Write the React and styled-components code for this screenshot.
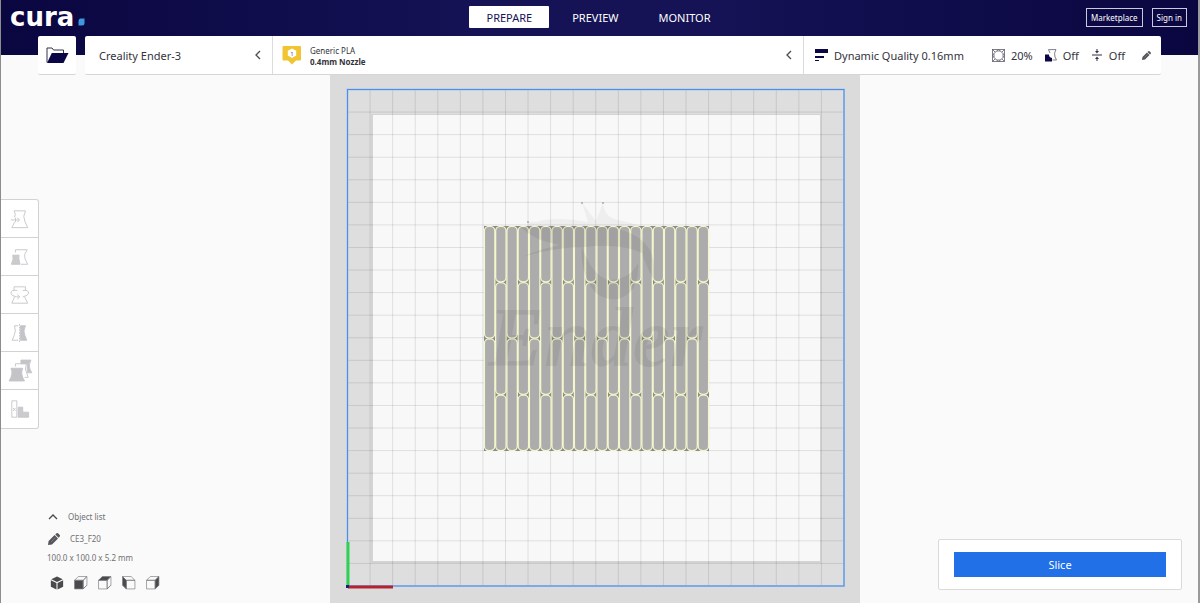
import React from 'react'
import styled, { createGlobalStyle } from 'styled-components'

const GlobalStyle = createGlobalStyle`
  * { box-sizing: border-box; }
  body {
    margin: 0;
    background: #fafafa;
    color: #33333b;
    font-family: "Noto Sans", "Open Sans", sans-serif;
    font-size: 11px;
  }
  button { font: inherit; color: inherit; cursor: pointer; }
  svg { display: block; }
`

const Page = styled.div`
  display: flex;
  flex-direction: column;
  min-height: 100vh;
  border-left: 1px solid #8c8c8e;
  border-right: 2px solid #9a9a9c;
`

const Header = styled.header`
  background: linear-gradient(90deg, #090640 0%, #151255 40%, #151255 60%, #090640 100%) no-repeat;
  background-size: 100% 55px;
`

const TopBar = styled.div`
  display: grid;
  grid-template-columns: 1fr auto 1fr;
  align-items: center;
  height: 36px;
  padding: 0 11px 2px 9px;
`

const Logo = styled.a`
  display: flex;
  align-items: flex-end;
  gap: 4px;
  color: #fff;
  font: bold 26px/30px "DejaVu Sans", sans-serif;
  text-decoration: none;
  svg { margin-bottom: 6px; }
`

const Stages = styled.nav`
  display: flex;
  gap: 6px;
`

const Stage = styled.button`
  height: 22px;
  padding: 0 17px;
  border: 0;
  border-radius: 1px;
  background: ${p => (p.$active ? '#fff' : 'transparent')};
  color: ${p => (p.$active ? '#151255' : '#fff')};
`

const Account = styled.div`
  display: flex;
  justify-content: flex-end;
  gap: 9px;
`

const OutlineButton = styled.button`
  height: 19px;
  padding: 0 4px;
  border: 1px solid #c9c8dc;
  background: none;
  color: #fff;
  font-size: 8px;
`

const ConfigRow = styled.div`
  display: flex;
  gap: 9px;
  padding: 0 37px;
`

const OpenButton = styled.button`
  display: grid;
  place-items: center;
  width: 38px;
  height: 39px;
  padding: 0;
  border: 0;
  border-bottom: 1px solid #d6d6d6;
  border-radius: 2px;
  background: #fff;
`

const ConfigBar = styled.div`
  display: grid;
  grid-template-columns: 188px 1fr 357px;
  flex: 1;
  height: 39px;
  border-bottom: 1px solid #d6d6d6;
  border-radius: 2px;
  background: #fff;
`

const ConfigItem = styled.button`
  display: flex;
  align-items: center;
  gap: ${p => p.$gap || 8}px;
  padding: 0 9px 0 ${p => p.$left || 9}px;
  border: 0;
  border-right: ${p => (p.$last ? '0' : '1px solid #dcdcdc')};
  background: none;
  text-align: left;
`

const Grow = styled.span`
  flex: 1;
`

const Material = styled.span`
  flex: 1;
  padding-top: 2px;
  font-size: 8px;
  line-height: 11px;
  b { display: block; }
`

const Setting = styled.span`
  display: flex;
  align-items: center;
  gap: 6px;
`

const EditSettings = styled.span`
  padding: 0 1px 0 5px;
`

const Main = styled.main`
  display: grid;
  flex: 1;
  grid-template-rows: minmax(0, 1fr);
`

const Scene = styled.div`
  display: flex;
  justify-content: center;
  grid-area: 1 / 1;
  padding-right: 9px;
`

const Overlay = styled.div`
  display: flex;
  flex-direction: column;
  justify-content: space-between;
  grid-area: 1 / 1;
  z-index: 1;
  padding-top: 124px;
`

const Tools = styled.div`
  display: flex;
  flex-direction: column;
  width: 38px;
  border: 1px solid #d2d2d2;
  border-left: 0;
  border-radius: 0 3px 3px 0;
  background: #fff;
`

const Tool = styled.button`
  display: grid;
  place-items: center;
  height: 38px;
  padding: 0;
  border: 0;
  border-bottom: 1px solid #d2d2d2;
  background: none;
  &:last-child { border-bottom: 0; }
`

const Footer = styled.footer`
  display: flex;
  justify-content: space-between;
  align-items: flex-end;
  padding: 0 16px 13px 46px;
`

const ObjectInfo = styled.div`
  display: flex;
  flex-direction: column;
  align-items: flex-start;
  color: #707074;
  font-size: 8px;
  line-height: 12px;
`

const ObjectButton = styled.button`
  display: flex;
  align-items: center;
  gap: 10px;
  height: 22px;
  padding: 0 0 0 1px;
  border: 0;
  background: none;
`

const Size = styled.p`
  margin: 2px 0 12px;
`

const Views = styled.div`
  display: flex;
  gap: 10px;
  padding-left: 3px;
`

const ViewButton = styled.button`
  padding: 0;
  border: 0;
  background: none;
`

const ActionPanel = styled.section`
  width: 244px;
  padding: 12px 15px;
  border: 1px solid #dadada;
  border-radius: 2px;
  background: #fff;
`

const SliceButton = styled.button`
  display: block;
  width: 100%;
  height: 25px;
  border: 0;
  background: #2170e8;
  color: #fff;
`

const Chevron = ({ up }) => (
  <svg width="10" height="10" viewBox="0 0 10 10" fill="none" stroke="#4a4a50" strokeWidth="1.3">
    <path d={up ? 'M1 7 L5 3 L9 7' : 'M7 1 L3 5 L7 9'} />
  </svg>
)

const Pencil = ({ size = 12 }) => (
  <svg width={size} height={size} viewBox="0 0 12 12" fill="#55555b">
    <path d="M0 12 L.6 8 L6.600 2 L10 5.400 L4 11.400 Z" />
    <path d="M7.300 1.400 L8.500 .3 Q9.300 -.3 10 .3 L11.700 2 Q12.300 2.700 11.700 3.500 L10.600 4.700 Z" />
    <path d="M3.200 8.800 L7.500 4.500" stroke="#a4a4a8" strokeWidth=".5" />
  </svg>
)

const FolderIcon = () => (
  <svg width="23" height="17" viewBox="0 0 23 17">
    <path d="M1 15.5 V1 H6 L7.5 3 H17.5 V6" fill="none" stroke="#33334a" />
    <path d="M5.8 6 H22.5 L17.5 16 H1 Z" fill="#0b0747" />
  </svg>
)

const MaterialIcon = () => (
  <svg width="20" height="20" viewBox="0 0 20 20">
    <path d="M1.5 1 H18 Q19 1 19 2 V14.5 Q19 15.5 18 15.5 H14 L10 19.5 L6 15.5 H1.5 Q.5 15.5 .5 14.5 V2 Q.5 1 1.5 1 Z" fill="#f1c432" />
    <path d="M10 3.500 L14.200 5.800 V10.600 L10 13 L5.800 10.600 V5.800 Z" fill="#fff" />
    <text x="10" y="10.500" fontSize="6" textAnchor="middle" fill="#55555b">1</text>
  </svg>
)

const QualityIcon = () => (
  <svg width="13" height="12" viewBox="0 0 13 12" fill="#0b0747">
    <path d="M0 0 H13 V4 H0 Z M0 7 H9 V9 H0 Z M0 11 H4 V12 H0 Z" />
  </svg>
)

const InfillIcon = () => (
  <svg width="13" height="13" viewBox="0 0 13 13" fill="none" stroke="#5f5f6e" strokeWidth=".8">
    <rect x=".5" y=".5" width="12" height="12" />
    <path d="M4.500 2 H8.500 L11 4.500 V8.500 L8.500 11 H4.500 L2 8.500 V4.500 Z" />
    <path d="M.5 .5 L3.200 3.200 M12.500 .5 L9.800 3.200 M12.500 12.500 L9.800 9.800 M.5 12.500 L3.200 9.800 M4.500 2 L6.500 .5 L8.500 2 M4.500 11 L6.500 12.500 L8.500 11 M2 4.500 L.5 6.500 L2 8.500 M11 4.500 L12.500 6.500 L11 8.500" />
  </svg>
)

const SupportIcon = () => (
  <svg width="12" height="13" viewBox="0 0 12 13">
    <path d="M3.500 .6 H11 Q8.600 4 10 8 L11.500 11 H7.500 M3.500 .6 L5 4" fill="none" stroke="#5f5f6e" strokeWidth=".8" />
    <path d="M0 5.500 H4 Q3.800 8 7 9 V12.500 H0 Z" fill="#0b0747" />
  </svg>
)

const AdhesionIcon = () => (
  <svg width="12" height="12" viewBox="0 0 12 12" fill="#33334a">
    <path d="M1 5.600 H11 V6.400 H1 Z M5.500 0 H6.500 V2 H8 L6 4.500 L4 2 H5.500 Z M5.500 12 H6.500 V10 H8 L6 7.500 L4 10 H5.500 Z" />
  </svg>
)

const toolIcons = {
  Move: (
    <>
      <path d="M4 8 Q6 5 3.500 1 H16 Q12.500 7 15.500 13 L18.500 19.500 H1 L4 13.500" />
      <path d="M0 11 H9 M7 8.500 L9.500 11 L7 13.500 M5 8.500 V13.500" />
    </>
  ),
  Scale: (
    <>
      <path d="M5 5 V2 H18 Q13.500 7 15.500 12 L18.500 18 H11" />
      <path d="M2 8 H9 Q8 11 10 18 H.5 Q3.500 12 2 8 Z" fill="#cbcbce" />
    </>
  ),
  Rotate: (
    <>
      <path d="M3.500 5 V1 H16 V5 M15 12 L18.500 19 H1 L4 12" />
      <path d="M7 5 Q0 4 0 8 Q0 11 6 12 H9 M7 9.500 L9.800 12 L7 14.500 M13 5 Q19.500 4 19.500 8 Q19 11 13 12" />
    </>
  ),
  Mirror: (
    <>
      <path d="M8 2 H4 Q6 8 3.500 13 L1.500 18 H8" />
      <path d="M9.500 0 V20" strokeDasharray="2 1" />
      <path d="M10.500 2 H16 Q13 8 15.500 13 L17.500 18 H10.500 Z" fill="#c4c4c8" />
    </>
  ),
  'Per Model Settings': (
    <>
      <path d="M11 -2 H22 Q19 4 21 8 L23 12 H18 V2 H11 Z" fill="#c4c4c8" />
      <path d="M5 5 V2 H17 L16 8 L19 17 H15" />
      <path d="M0 7 H13 Q10 13 15 21 H-2 Q3 13 0 7 Z" fill="#c4c4c8" />
    </>
  ),
  'Support Blocker': (
    <>
      <path d="M1 1 H6.500 V19 H1 Z M2.500 9 L5 12 M5 9 L2.500 12" />
      <path d="M8 8 H13 V13.500 H19.500 V19 H8 Z" fill="#cbcbce" />
    </>
  ),
}

const cubeFaces = {
  front: 'M.5 4 H8.500 V12 H.5 Z',
  top: 'M.5 4 L4 .5 H12 L8.500 4 Z',
  right: 'M8.500 4 L12 .5 V8.500 L8.500 12 Z',
}

const CubeIcon = ({ face, flip }) => (
  <svg width="14" height="14" viewBox="0 0 13 13" stroke="#77777b" strokeWidth=".6">
    <g transform={flip ? 'translate(12.500 0) scale(-1 1)' : undefined}>
      {Object.keys(cubeFaces).map(k => (
        <path key={k} d={cubeFaces[k]} fill={k === face ? '#4a4a4e' : 'none'} />
      ))}
      <path d="M8.500 12 L12 8.500" />
    </g>
  </svg>
)

const IsoCube = () => (
  <svg width="14" height="14" viewBox="0 0 13 13" fill="#4a4a4e">
    <path d="M6.500 .5 L11.800 3 L6.500 5.500 L1.200 3 Z M.8 4 L6 6.500 V12.500 L.8 10 Z M12.200 4 L7 6.500 V12.500 L12.200 10 Z" />
  </svg>
)

const PLATE = { x: 17.5, y: 14.5, size: 496.5, cells: 22 }
const MODEL = { x: 154, y: 151, size: 225, columns: 20 }

const gridLines = Array.from({ length: PLATE.cells - 1 }, (_, i) => ((i + 1) * PLATE.size) / PLATE.cells)

// strips alternate: cut in the middle, or at one and three quarters
const strips = []
for (let c = 0; c < MODEL.columns; c++) {
  const cuts = c % 2 ? [0, 0.25, 0.75, 1] : [0, 0.5, 1]
  for (let i = 0; i < cuts.length - 1; i++) {
    strips.push({
      x: MODEL.x + (c * MODEL.size) / MODEL.columns,
      y: MODEL.y + cuts[i] * MODEL.size,
      h: (cuts[i + 1] - cuts[i]) * MODEL.size,
    })
  }
}

const BuildPlate = () => (
  <svg width="530" height="100%" viewBox="0 0 530 528" preserveAspectRatio="xMidYMid slice" role="img" aria-label="Build plate">
    <rect width="530" height="528" fill="#dbdbdc" />
    <rect x={PLATE.x} y={PLATE.y} width={PLATE.size} height={PLATE.size} fill="#dedede" />
    <rect x="41" y="39" width="450" height="449" fill="#d4d4d4" />
    <rect x="43" y="40" width="447" height="446" fill="#f8f8f8" />
    <g stroke="#000" strokeOpacity=".1">
      {gridLines.map(d => (
        <path key={d} d={`M${PLATE.x + d} ${PLATE.y} v${PLATE.size} M${PLATE.x} ${PLATE.y + d} h${PLATE.size}`} />
      ))}
    </g>
    <path
      d="M198 152 Q196 146 206 147 Q225 141 258 147 L252 128 L266 146 L273 128 Q274 142 288 145 Q304 148 312 152 Z"
      fill="#000"
      fillOpacity=".04"
    />
    <rect x={MODEL.x} y={MODEL.y} width={MODEL.size} height={MODEL.size} fill="#8b8b84" />
    {strips.map(s => (
      <rect
        key={`${s.x}-${s.y}`}
        x={s.x + 0.4}
        y={s.y + 0.4}
        width={MODEL.size / MODEL.columns - 0.8}
        height={s.h - 0.8}
        rx="4.5"
        fill="#adacad"
        stroke="#f4f6cc"
        strokeWidth="1.3"
      />
    ))}
    <g fill="#3c3c3c" fillOpacity=".09">
      <path d="M190 152 H280 Q322 160 324 190 V205 Q318 196 312 178 Q290 168 255 172 Q225 172 192 182 Q210 174 230 170 Q205 166 190 152 Z" />
      <path d="M252 172 Q262 200 278 205 Q300 205 308 188 Q310 218 288 224 Q266 226 258 206 Q250 190 252 172 Z" />
      <text x="158" y="291" fontFamily="Liberation Serif, serif" fontWeight="bold" fontStyle="italic" fontSize="84">Ender</text>
    </g>
    <g fill="#aaa">
      <circle cx="252" cy="128" r="1" />
      <circle cx="273" cy="128" r="1" />
      <circle cx="198" cy="147" r="1" />
    </g>
    <rect x={PLATE.x} y={PLATE.y} width={PLATE.size} height={PLATE.size} fill="none" stroke="#a9c6ee" strokeWidth="2" />
    <rect x={PLATE.x} y={PLATE.y} width={PLATE.size} height={PLATE.size} fill="none" stroke="#4f8fe0" />
    <path d="M18 512 V467" stroke="#2fd24f" strokeWidth="3" />
    <path d="M18 512 H63" stroke="#b3242f" strokeWidth="3" />
    <path d="M16 510 h3 v3 h-3 Z" fill="#1a1a8c" />
  </svg>
)

export default function App() {
  return (
    <Page>
      <GlobalStyle />
      <Header>
        <TopBar>
          <Logo href="#">
            cura
            <svg width="7" height="8" viewBox="0 0 7 8">
              <path d="M2.500 .5 H6.500 V5 Q6.500 7.500 4 7.500 H.5 V3 Q.5 .5 2.500 .5 Z" fill="#3f97dc" />
            </svg>
          </Logo>
          <Stages>
            <Stage $active>PREPARE</Stage>
            <Stage>PREVIEW</Stage>
            <Stage>MONITOR</Stage>
          </Stages>
          <Account>
            <OutlineButton>Marketplace</OutlineButton>
            <OutlineButton>Sign in</OutlineButton>
          </Account>
        </TopBar>
        <ConfigRow>
          <OpenButton aria-label="Open file">
            <FolderIcon />
          </OpenButton>
          <ConfigBar>
            <ConfigItem $left={14}>
              <Grow>Creality Ender-3</Grow>
              <Chevron />
            </ConfigItem>
            <ConfigItem>
              <MaterialIcon />
              <Material>
                Generic PLA
                <b>0.4mm Nozzle</b>
              </Material>
              <Chevron />
            </ConfigItem>
            <ConfigItem $last $left={11} $gap={12}>
              <Grow>
                <Setting>
                  <QualityIcon />
                  Dynamic Quality 0.16mm
                </Setting>
              </Grow>
              <Setting>
                <InfillIcon />
                20%
              </Setting>
              <Setting>
                <SupportIcon />
                Off
              </Setting>
              <Setting>
                <AdhesionIcon />
                Off
              </Setting>
              <EditSettings>
                <Pencil size={9} />
              </EditSettings>
            </ConfigItem>
          </ConfigBar>
        </ConfigRow>
      </Header>
      <Main>
        <Scene>
          <BuildPlate />
        </Scene>
        <Overlay>
          <Tools>
            {Object.keys(toolIcons).map(name => (
              <Tool key={name} aria-label={name}>
                <svg width="20" height="20" viewBox="-1 -1 22 22" fill="none" stroke="#c6c6ca" strokeWidth="1" overflow="visible">
                  {toolIcons[name]}
                </svg>
              </Tool>
            ))}
          </Tools>
          <Footer>
            <ObjectInfo>
              <ObjectButton>
                <Chevron up />
                Object list
              </ObjectButton>
              <ObjectButton>
                <Pencil />
                CE3_F20
              </ObjectButton>
              <Size>100.0 x 100.0 x 5.2 mm</Size>
              <Views>
                <ViewButton aria-label="3D view"><IsoCube /></ViewButton>
                <ViewButton aria-label="Front view"><CubeIcon face="front" /></ViewButton>
                <ViewButton aria-label="Top view"><CubeIcon face="top" /></ViewButton>
                <ViewButton aria-label="Left view"><CubeIcon face="right" flip /></ViewButton>
                <ViewButton aria-label="Right view"><CubeIcon face="right" /></ViewButton>
              </Views>
            </ObjectInfo>
            <ActionPanel>
              <SliceButton>Slice</SliceButton>
            </ActionPanel>
          </Footer>
        </Overlay>
      </Main>
    </Page>
  )
}
